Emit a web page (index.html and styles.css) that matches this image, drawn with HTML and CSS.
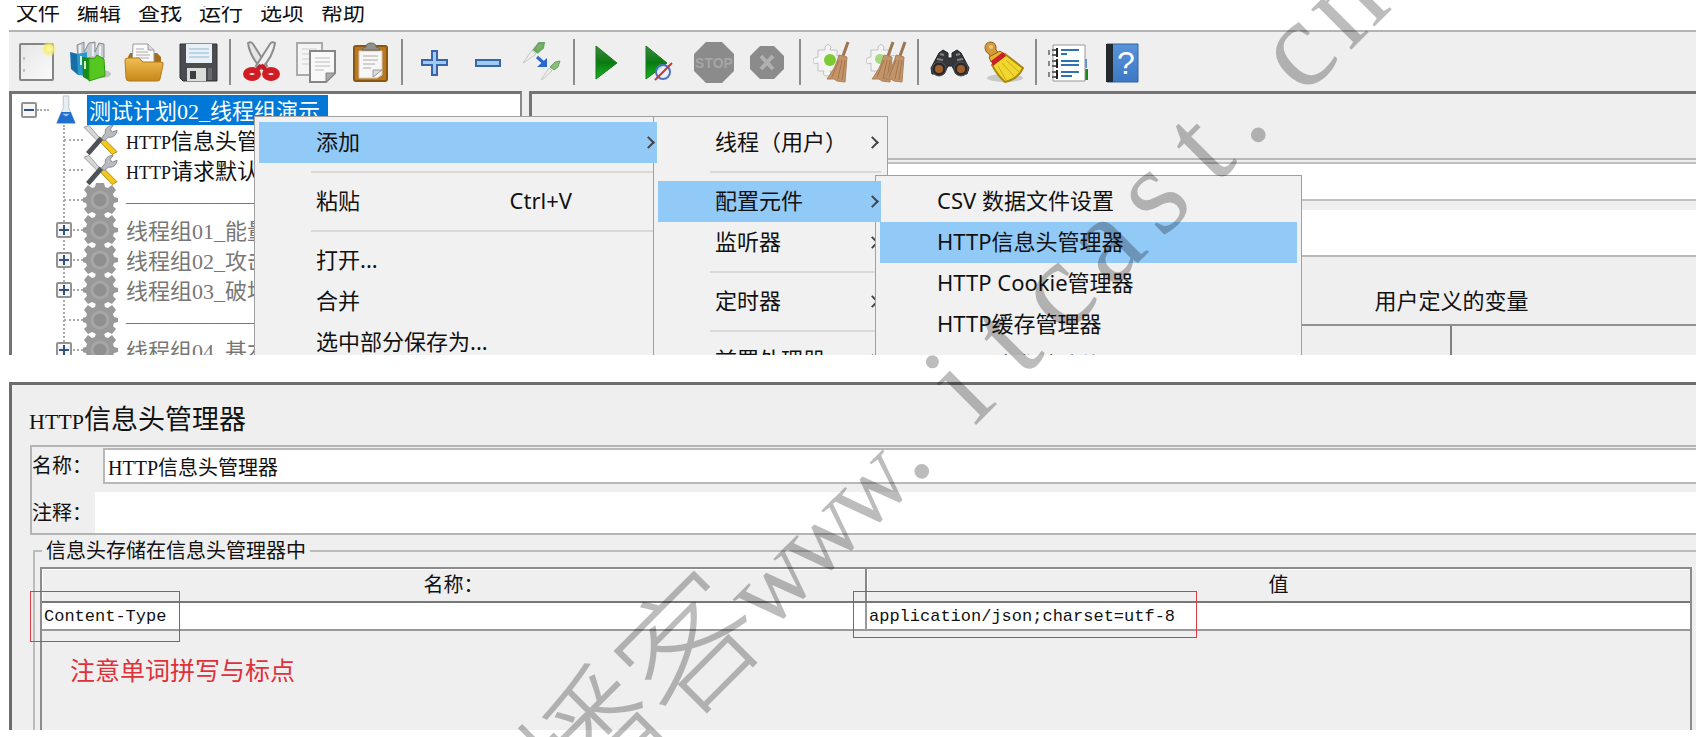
FILE: index.html
```html
<!DOCTYPE html>
<html lang="zh-CN">
<head>
<meta charset="utf-8">
<title>HTTP信息头管理器</title>
<link rel="stylesheet" href="styles.css">
</head>
<body>
<svg class="defs" width="0" height="0" aria-hidden="true">
  <defs>
    <linearGradient id="gPlay" x1="0" y1="0" x2="0" y2="1"><stop offset="0" stop-color="#3f8a45"/><stop offset=".5" stop-color="#0a7a12"/><stop offset="1" stop-color="#18b520"/></linearGradient>
    <linearGradient id="gFolder" x1="0" y1="0" x2="0" y2="1"><stop offset="0" stop-color="#f0bf52"/><stop offset="1" stop-color="#c8861a"/></linearGradient>
    <linearGradient id="gPaper" x1="0" y1="0" x2="1" y2="1"><stop offset="0" stop-color="#e6e6e6"/><stop offset="1" stop-color="#fbfbfb"/></linearGradient>
    <linearGradient id="gHelp" x1="0" y1="0" x2="0" y2="1"><stop offset="0" stop-color="#5a93d8"/><stop offset="1" stop-color="#3c78c4"/></linearGradient>
    <radialGradient id="gGlow"><stop offset="0" stop-color="#fffbb0"/><stop offset=".5" stop-color="#f6ec7c"/><stop offset="1" stop-color="#f6ec7c" stop-opacity="0"/></radialGradient>
    <symbol id="gear" viewBox="0 0 35 34">
      <path fill="#999" d="M13 0h8l1 4 3 1 4-3 4 5-3 4 1 3 4 1v4l-4 1-1 3 3 3-4 5-4-2-4 2-1 2h-6l-1-2-4-2-4 2-4-5 3-3-1-3-4-1v-4l4-1 1-3-3-4 4-5 4 3 3-1z"/>
      <circle cx="17" cy="17" r="8" fill="#8f8f8f" stroke="#a6a6a6" stroke-width="3"/>
    </symbol>
    <symbol id="tools" viewBox="0 0 36 32">
      <path d="M1 3l5-2 13 15-3 2z" fill="#d7d7d7" stroke="#999"/>
      <path d="M17 17l4-3 14 14-5 3z" fill="#f2c71e" stroke="#b08c10"/>
      <path d="M5 30l14-16" stroke="#4d5258" stroke-width="5"/>
      <path d="M19 14l4-5c-1-5 3-8 8-8l-3 4 2 3 5-2c0 5-5 8-9 7l-4 4z" fill="#b9bcc0" stroke="#85888c"/>
    </symbol>
    <symbol id="broom" viewBox="0 0 24 42">
      <path d="M22 1l-5 14" stroke="#9b7650" stroke-width="3"/>
      <path d="M13 14l8 2-2 25-8-1-3-2-7 0c5-7 9-13 12-24z" fill="#c49468" stroke="#a98260"/>
      <path d="M13 19L6 36M16 19l-4 19M19 19l-3 20" stroke="#a1754d" fill="none"/>
    </symbol>
    <symbol id="whiteGear" viewBox="0 0 30 34">
      <path fill="#f4f4f4" stroke="#c2c2c2" d="M12 4q3-5 6 0l-1 3h7v6q6-2 6 3t-6 3v9h-7q2 5-3 5t-3-5H5v-8q-5 2-5-2t5-4V7h7z"/>
    </symbol>
  </defs>
</svg>

<main class="page">
<section class="window window-plan">
  <nav class="menubar">
    <button>文件</button><button>编辑</button><button>查找</button><button>运行</button><button>选项</button><button>帮助</button>
  </nav>

  <div class="toolbar" role="toolbar">
    <button aria-label="新建"><svg viewBox="0 0 42 42"><rect x="5" y="3" width="33" height="36" rx="1" fill="url(#gPaper)" stroke="#858585" stroke-width="2"/><path d="M9 16v3M9 28v3" stroke="#999"/><circle cx="34" cy="8" r="8" fill="url(#gGlow)"/></svg></button>
    <button aria-label="模板"><svg viewBox="0 0 42 42"><ellipse cx="33" cy="33" rx="9" ry="4" fill="#c4c4c4"/><path d="M8 4l7-3v10l5-9 6-1v10l4-9 5 1v14H9z" fill="#c5cbd0" stroke="#878e94"/><path d="M11 4v13M24 3v12M31 5v11" stroke="#eef1f3" stroke-width="2"/><path d="M1 11l8 2v21l-7-6z" fill="#1670a8"/><path d="M8 13l10-2v24l-9-1z" fill="#2c98ca"/><path d="M12 15v9" stroke="#cfefff" stroke-width="2"/><path d="M13 16l8 1v23l-7-4z" fill="#178a17"/><path d="M20 17l5 1 3-4 7 4 1 17-16 5z" fill="#56c71f" stroke="#2f9a12"/><path d="M16 20v8" stroke="#cdf5bb" stroke-width="2"/></svg></button>
    <button aria-label="打开"><svg viewBox="0 0 42 42"><path d="M7 12h27l4 4v17H5V16z" fill="#a56f18"/><path d="M10 3h15l6 6v15H9z" fill="#fafafa" stroke="#999"/><path d="M25 3v6h6" fill="#ddd" stroke="#999"/><path d="M13 8h8M13 11h12M13 14h14M13 17h13" stroke="#aaa"/><path d="M2 19q0-2 3-2h11l4 4h18q3 0 2 3l-3 14q0 2-3 2H6q-3 0-3-3z" fill="url(#gFolder)" stroke="#b47b1c"/></svg></button>
    <button aria-label="保存"><svg viewBox="0 0 42 42"><path d="M3 3h37v37H6l-3-3z" fill="#4a4c50" stroke="#2e3034"/><rect x="9" y="3" width="26" height="19" fill="#e9f1f7"/><path d="M12 8h20M12 12h20M12 16h20" stroke="#8eb9d3"/><path d="M10 27h19v13H10z" fill="#dcdcdc"/><path d="M13 30h6v8h-6z" fill="#3b3d42"/><path d="M31 27h4v12h-4z" fill="#686a6e"/></svg></button>
    <span class="sep"></span>
    <button aria-label="剪切"><svg viewBox="0 0 42 42"><path d="M7 2q3-2 5 1l14 22-5 3Q9 16 7 2z" fill="#e5e5e5" stroke="#8d8d8d" stroke-width="2"/><path d="M34 2q-3-2-5 1L15 25l5 3Q32 16 34 2z" fill="#f0f0f0" stroke="#8d8d8d" stroke-width="2"/><path d="M20 24l-4 5M20 24l5 5" stroke="#c51b20" stroke-width="4"/><ellipse cx="11" cy="33" rx="6" ry="4" fill="none" stroke="#cf1d23" stroke-width="6"/><ellipse cx="30" cy="33" rx="6" ry="4" fill="none" stroke="#cf1d23" stroke-width="6"/></svg></button>
    <button aria-label="复制"><svg viewBox="0 0 42 42"><path d="M2 2h25v32H2z" fill="#f4f4f4" stroke="#aaa" stroke-width="2"/><path d="M7 8h15M7 13h12M7 18h12M7 23h8" stroke="#ccc"/><path d="M15 10h25v22l-9 9H15z" fill="#f8f8f8" stroke="#868686" stroke-width="2"/><path d="M31 41v-9h9z" fill="#aaa" stroke="#868686"/><path d="M20 17h15M20 21h15M20 25h15M20 29h9" stroke="#bbb"/></svg></button>
    <button aria-label="粘贴"><svg viewBox="0 0 42 42"><rect x="5" y="5" width="33" height="35" rx="2" fill="#b9781f" stroke="#8a5610" stroke-width="2"/><path d="M10 10h23v24l-5 3H10z" fill="#f7f7f7" stroke="#d5ccbf"/><path d="M13 9q1-3 4-3 0-4 5-4t5 4q3 0 4 3z" fill="#8f918c" stroke="#696b66"/><path d="M14 15h15M14 19h15M14 23h12M14 27h8" stroke="#aaa"/><path d="M24 36v-7h9z" fill="#ddd" stroke="#999"/></svg></button>
    <span class="sep"></span>
    <button aria-label="展开全部"><svg viewBox="0 0 42 42"><path d="M19 10h5v9h10v5H24v10h-5V24H9v-5h10z" fill="#a3c8f2" stroke="#3767a8" stroke-width="2"/></svg></button>
    <button aria-label="折叠全部"><svg viewBox="0 0 42 42"><rect x="9" y="19" width="24" height="6" fill="#a3c8f2" stroke="#3767a8" stroke-width="2"/></svg></button>
    <button aria-label="切换"><svg viewBox="0 0 42 42"><path d="M2 22L11 9l4 4L4 21z" fill="#eee" stroke="#c5c9c2"/><path d="M12 8l5 4M14 7l4-5 5 0-1 5-5 4z" stroke="#6ca862" stroke-width="2" fill="#7cb270"/><path d="M16 16l8 7" stroke="#2c66d0" stroke-width="3"/><path d="M26 17v9h-10z" fill="#2c66d0"/><path d="M20 39l8-12 3 3-9 8z" fill="#eee" stroke="#c5c9c2"/><path d="M29 26l5-5 5-1-2 6-4 3z" fill="#8abb7f" stroke="#6ca862"/></svg></button>
    <span class="sep"></span>
    <button aria-label="启动"><svg viewBox="0 0 42 42"><path d="M11 5v33l21-16z" fill="url(#gPlay)" stroke="#147a1b"/></svg></button>
    <button aria-label="不停顿开始"><svg viewBox="0 0 42 42"><path d="M7 5v33l21-16z" fill="url(#gPlay)" stroke="#147a1b"/><circle cx="24" cy="31" r="7" fill="#e8eefb" fill-opacity=".8" stroke="#4b74bf" stroke-width="2"/><path d="M16 39l17-17" stroke="#c73737" stroke-width="2"/></svg></button>
    <button aria-label="停止"><svg viewBox="0 0 42 42"><path d="M13 1h16l12 12v17L29 42H13L1 30V13z" fill="#8b8b8b"/><text x="21" y="27" text-anchor="middle" class="stop-text">STOP</text></svg></button>
    <button aria-label="关闭"><svg viewBox="0 0 42 42"><path d="M13 5h14l10 10v13L27 38H13L3 28V15z" fill="#8b8b8b"/><path d="M14 15l12 13M26 15L14 28" stroke="#b0b0b0" stroke-width="4"/></svg></button>
    <span class="sep"></span>
    <button aria-label="清除"><svg viewBox="0 0 42 42"><use href="#whiteGear" x="2" y="2" width="30" height="34"/><circle cx="19" cy="19" r="6" fill="#7ccb32"/><use href="#broom" x="15" y="0" width="24" height="42"/></svg></button>
    <button aria-label="清除全部"><svg viewBox="0 0 42 42"><use href="#whiteGear" x="1" y="2" width="30" height="34"/><circle cx="15" cy="18" r="5" fill="#a5d880"/><use href="#broom" x="6" y="0" width="24" height="42"/><use href="#broom" x="18" y="0" width="24" height="42"/></svg></button>
    <span class="sep"></span>
    <button aria-label="查找"><svg viewBox="0 0 42 42"><path d="M2 27L10 12l4-3 5 3v5h4v-5l5-3 4 3 8 15-2 6H27l-4-8h-4l-4 8H3z" fill="#35363a" stroke="#1f2022"/><path d="M11 13l4 1M27 14l4-1M8 18l6 1M28 19l6-1" stroke="#808286" stroke-width="2"/><circle cx="10" cy="28" r="7" fill="#2b2b2d" stroke="#555"/><circle cx="32" cy="28" r="7" fill="#2b2b2d" stroke="#555"/><circle cx="10" cy="28" r="4" fill="#a35f29"/><circle cx="32" cy="28" r="4" fill="#a35f29"/></svg></button>
    <button aria-label="重置查找"><svg viewBox="0 0 42 42"><ellipse cx="22" cy="37" rx="18" ry="4" fill="#c9c9c9"/><path d="M2 7q0-6 6-6 6 1 5 8l3 3-8 5-2-4Q2 11 2 7z" fill="#d59a3f" stroke="#96631a"/><circle cx="8" cy="6" r="2" fill="#f0c878"/><path d="M6 16l11-6 4 3-13 8z" fill="#e8b62d" stroke="#96631a"/><path d="M9 24l13-11 18 14q-5 11-18 14-7-6-13-17z" fill="#f1d72d" stroke="#a88a10" stroke-width="2"/><path d="M8 20l12-9 3 4-13 10z" fill="#c8202a"/><path d="M15 25l8 14M19 22l12 13M23 19l13 12" stroke="#c9a91c"/></svg></button>
    <span class="sep"></span>
    <button aria-label="函数助手"><svg viewBox="0 0 42 42"><path d="M36 18h4v9h-4z" fill="#5b8fd8"/><path d="M35 28h6v11h-6z" fill="#188a1c"/><path d="M6 4h32v36H6z" fill="#fff" stroke="#999"/><path d="M2 9v5M2 20v5M2 31v5" stroke="#888" stroke-width="2"/><path d="M5 9h4M5 14h4M5 20h4M5 25h4M5 31h4M5 36h4" stroke="#666" stroke-width="2"/><path d="M10 7v9M10 18v9M10 29v9" stroke="#222" stroke-width="2"/><path d="M14 9h18M14 13h6M14 20h18M14 24h18M14 31h18M14 35h11" stroke="#2f73b0" stroke-width="2"/></svg></button>
    <button aria-label="帮助"><svg viewBox="0 0 42 42"><path d="M6 3h31v38H6z" fill="url(#gHelp)" stroke="#35639d"/><path d="M5 3h7v38H5z" fill="#24282f"/><text x="25" y="33" text-anchor="middle" class="help-text">?</text></svg></button>
  </div>

  <div class="split">
    <div class="tree-pane">
      <ul class="tree">
        <li>
          <div class="row row-root"><button class="toggle" aria-label="折叠"><i class="minus"></i></button><i class="dots"></i>
            <svg class="flask" viewBox="0 0 24 32"><path d="M9 1h6v13l7 16H2l7-16z" fill="#e9eef3" stroke="#b9c2ca"/><path d="M7 18h10l5 12H2z" fill="#1f6fd0"/><path d="M8 20l4 3 4-3" fill="#9cc8f4"/></svg>
            <span class="label selected">测试计划02_线程组演示</span></div>
          <ul class="children">
            <li class="row"><span class="knot"></span><svg class="node-icon"><use href="#tools"/></svg><span class="label"><span class="caps">HTTP</span>信息头管理器</span></li>
            <li class="row"><span class="knot"></span><svg class="node-icon"><use href="#tools"/></svg><span class="label"><span class="caps">HTTP</span>请求默认值</span></li>
            <li class="row off"><span class="knot"></span><svg class="node-icon"><use href="#gear"/></svg><span class="label">————————</span></li>
            <li class="row off"><span class="knot"><button class="toggle" aria-label="展开"><i class="plus"></i></button></span><svg class="node-icon"><use href="#gear"/></svg><span class="label">线程组01_能量</span></li>
            <li class="row off"><span class="knot"><button class="toggle" aria-label="展开"><i class="plus"></i></button></span><svg class="node-icon"><use href="#gear"/></svg><span class="label">线程组02_攻击</span></li>
            <li class="row off"><span class="knot"><button class="toggle" aria-label="展开"><i class="plus"></i></button></span><svg class="node-icon"><use href="#gear"/></svg><span class="label">线程组03_破坏</span></li>
            <li class="row off"><span class="knot"></span><svg class="node-icon"><use href="#gear"/></svg><span class="label">————————</span></li>
            <li class="row off"><span class="knot"><button class="toggle" aria-label="展开"><i class="plus"></i></button></span><svg class="node-icon"><use href="#gear"/></svg><span class="label">线程组04_基本</span></li>
          </ul>
        </li>
      </ul>
    </div>
    <div class="detail-pane">
      <div class="plan-form">
        <div class="plan-head"></div>
        <div class="plan-fields">
          <input class="plan-name" type="text" aria-label="名称">
          <input class="plan-note" type="text" aria-label="注释">
        </div>
        <h2 class="plan-title">用户定义的变量</h2>
        <div class="plan-cols"><span></span><span></span></div>
      </div>
    </div>
  </div>

  <ul class="menu menu-main" role="menu">
    <li><button class="item active"><span>添加</span><i class="arrow"></i></button></li>
    <li class="rule"></li>
    <li><button class="item"><span>粘贴</span><kbd>Ctrl+V</kbd></button></li>
    <li class="rule"></li>
    <li><button class="item"><span>打开...</span></button></li>
    <li><button class="item"><span>合并</span></button></li>
    <li><button class="item"><span>选中部分保存为...</span></button></li>
  </ul>
  <ul class="menu menu-add" role="menu">
    <li><button class="item"><span>线程（用户）</span><i class="arrow"></i></button></li>
    <li class="rule"></li>
    <li><button class="item active"><span>配置元件</span><i class="arrow"></i></button></li>
    <li><button class="item"><span>监听器</span><i class="arrow"></i></button></li>
    <li class="rule"></li>
    <li><button class="item"><span>定时器</span><i class="arrow"></i></button></li>
    <li class="rule"></li>
    <li><button class="item"><span>前置处理器</span><i class="arrow"></i></button></li>
  </ul>
  <ul class="menu menu-config" role="menu">
    <li><button class="item"><span>CSV 数据文件设置</span></button></li>
    <li><button class="item active"><span>HTTP信息头管理器</span></button></li>
    <li><button class="item"><span>HTTP Cookie管理器</span></button></li>
    <li><button class="item"><span>HTTP缓存管理器</span></button></li>
    <li><button class="item"><span>HTTP请求默认值</span></button></li>
  </ul>
</section>

<section class="window window-header">
  <h1 class="title"><span class="caps">HTTP</span>信息头管理器</h1>
  <div class="fields">
    <div class="field"><label for="name">名称：</label><input id="name" class="name-input" type="text" value="HTTP信息头管理器"></div>
    <div class="field"><label for="note">注释：</label><input id="note" class="note-input" type="text"></div>
  </div>
  <fieldset class="store">
    <legend>信息头存储在信息头管理器中</legend>
    <div class="table-box">
      <table>
        <thead><tr><th>名称：</th><th>值</th></tr></thead>
        <tbody><tr><td><span class="mark mark-key">Content-Type</span></td><td><span class="mark mark-value">application/json;charset=utf-8</span></td></tr></tbody>
      </table>
      <p class="hint">注意单词拼写与标点</p>
    </div>
  </fieldset>
</section>

<svg class="watermark" aria-hidden="true">
  <g transform="translate(688 645) rotate(-45)" text-anchor="middle">
    <text class="wm-cjk" x="-136 0" y="52">播客</text>
    <text class="wm-w" x="102 170 238" y="48">www</text>
    <text class="wm-latin" x="288 374 442 510 578 646 714 764 850 918" y="48">.itcast.cn</text>
  </g>
</svg>
</main>
</body>
</html>
```
FILE: styles.css
```css
* { box-sizing: border-box; }
body {
  margin: 0;
  background: #fff;
  color: #111;
  font: 22px/30px "Liberation Serif", "Noto Sans CJK SC", sans-serif;
}
ul { list-style: none; margin: 0; padding: 0; }
button { border: 0; padding: 0; margin: 0; background: none; font: inherit; color: inherit; }
input { border: 0; border-radius: 0; padding: 0; font: inherit; color: inherit; background: #fff; min-width: 0; outline: 0; }
.defs { position: absolute; }
.page { position: relative; min-height: 100vh; overflow: hidden; padding: 6px 2px 7px 9px; }
.window { position: relative; overflow: hidden; background: #efefef; }

/* upper window */
.window-plan { height: 349px; }
.menubar {
  display: flex;
  gap: 17px;
  height: 26px;
  padding-left: 7px;
  background: #fff;
  border-bottom: 2px solid #b4b4b4;
  font-family: "Noto Sans", "Noto Sans CJK SC", sans-serif;
}
.menubar button { height: 10px; line-height: 10px; }
.toolbar { display: flex; align-items: center; height: 59px; }
.toolbar button { width: 54px; height: 42px; display: flex; justify-content: center; }
.toolbar svg { width: 42px; height: 42px; }
.sep { width: 10px; height: 46px; border-left: 4px solid #efefef; border-right: 4px solid #efefef; background: #8c8c8c; }
.stop-text { font: bold 14px "Liberation Sans", sans-serif; fill: #a6a6a6; }
.help-text { font: 32px "Liberation Sans", sans-serif; fill: #fff; }

.split { display: flex; gap: 7px; height: 264px; }
.tree-pane { width: 513px; flex: none; background: #fff; border: 3px solid #747476; border-right: 2px solid #8a8a8a; border-bottom: 0; overflow: hidden; padding: 1px 0 0 9px; }
.detail-pane { flex: 1; min-width: 0; border: 3px solid #747476; border-right: 0; border-bottom: 0; overflow: hidden; }
.row { display: flex; align-items: center; height: 30px; white-space: nowrap; }
.off { color: #777; }
.toggle { position: relative; width: 16px; height: 16px; flex: none; background: #f6f6f6; border: 2px solid #929292; border-radius: 2px; }
.minus, .plus { position: absolute; left: 1px; top: 5px; width: 10px; height: 2px; background: #33517f; }
.plus::after { content: ""; position: absolute; left: 4px; top: -4px; width: 2px; height: 10px; background: #33517f; }
.dots { width: 12px; border-top: 2px dotted #aaa; }
.flask { width: 24px; height: 30px; margin: 0 9px 0 5px; }
.label { height: 30px; line-height: 33px; }
.selected { background: #0078d7; color: #fff; padding: 0 8px 0 2px; }
.children { position: relative; padding-left: 35px; }
.children::before { content: ""; position: absolute; left: 42px; top: 0; bottom: 0; border-left: 2px dotted #aaa; }
.knot { position: relative; width: 27px; height: 16px; flex: none; }
.knot::before { content: ""; position: absolute; left: 8px; right: 0; top: 7px; border-top: 2px dotted #aaa; }
.knot .toggle { display: block; }
.node-icon { width: 35px; height: 34px; flex: none; margin-right: 8px; }
.caps { font-size: 18px; }

.plan-form { width: 158%; }
.plan-head { height: 64px; }
.plan-fields { display: flex; flex-direction: column; gap: 9px; border: 2px solid #b8b8b8; border-right: 0; padding-top: 2px; }
.plan-name { height: 39px; border: 2px solid #c0c0c0; }
.plan-note { height: 45px; }
.plan-title { margin: 0; padding: 30px 0 7px; font-size: 22px; line-height: 30px; font-weight: 400; text-align: center; }
.plan-cols { display: grid; grid-template-columns: 1fr 1fr; height: 60px; border-top: 2px solid #909094; }
.plan-cols span { border-right: 2px solid #808080; }

.menu {
  position: absolute;
  background: #f1f1f1;
  border: 1px solid #a0a0a0;
  padding: 5px 6px 4px 4px;
  font-family: "Noto Sans", "Noto Sans CJK SC", sans-serif;
}
.menu-main { left: 245px; top: 110px; width: 404px; padding-right: 0; }
.menu-add { left: 644px; top: 110px; width: 235px; }
.menu-config { left: 866px; top: 169px; width: 427px; padding-right: 4px; }
.item { position: relative; display: flex; align-items: center; width: 100%; height: 41px; padding: 0 0 4px 57px; white-space: nowrap; text-align: left; }
.item span { flex: 1; }
.item kbd { font: inherit; margin-right: 85px; }
.active { z-index: 2; background: #91c9f7; }
.arrow { position: absolute; top: 16px; right: 4px; width: 9px; height: 9px; border: solid #444; border-width: 2px 2px 0 0; transform: rotate(45deg); }
.rule { height: 18px; margin-left: 52px; padding-top: 8px; }
.rule::before { content: ""; display: block; height: 2px; background: #d9d9d9; }

/* lower window */
.window-header {
  height: 348px;
  margin-top: 27px;
  border: 3px solid #6c6c6c;
  border-width: 3px 0 0 3px;
  padding: 15px 0 0 17px;
  font-size: 20px;
}
.title { margin: 0 0 3px; font-size: 27px; line-height: 40px; font-weight: 400; }
.title .caps { font-size: 22px; }
.fields { display: flex; flex-direction: column; gap: 8px; border: 2px solid #b4b4b4; border-right: 0; padding: 1px 0 0; margin-left: 1px; }
.field { display: flex; align-items: center; }
.field label { width: 63px; white-space: nowrap; }
.name-input { flex: 1; height: 36px; margin-left: 8px; border: 2px solid #b8b8b8; border-right: 0; padding-left: 3px; }
.note-input { flex: 1; height: 41px; }
.store { margin: 0 -8px 0 4px; min-width: 0; padding: 0 10px 0 5px; border: 2px solid #bcbcbc; border-bottom: 0; }
.store legend { margin-left: 2px; padding: 0 4px; line-height: 32px; font-size: 20px; }
.table-box { border: 2px solid #8c8c8c; border-bottom: 0; height: 170px; }
table { width: 100%; border-collapse: collapse; table-layout: fixed; }
th { height: 33px; padding: 0; font-weight: 400; border-bottom: 2px solid #777; border-right: 2px solid #888; box-shadow: inset 1px 1px #fff; }
td { height: 28px; padding: 2px 0 0; background: #fff; border-bottom: 2px solid #999; border-right: 2px solid #999; font: 17px/24px "Liberation Mono", monospace; }
th:last-child, td:last-child { border-right: 0; }
.mark { position: relative; padding-left: 2px; }
.mark::after { content: ""; position: absolute; border: 1px solid #dd3b45; }
.mark-key::after { inset: -16px -14px -16px -12px; }
.mark-value::after { inset: -16px -22px -12px -14px; }
.hint { margin: 21px 0 0 28px; font: 25px/34px "Noto Sans CJK SC", sans-serif; color: #e0313a; }

.watermark { position: absolute; left: 0; top: 0; width: 100%; height: 100%; pointer-events: none; fill: #000; opacity: .26; z-index: 9; }
.wm-cjk { font: 300 136px "Noto Sans CJK SC", sans-serif; }
.wm-w { font: 106px "Liberation Serif", serif; }
.wm-latin { font: 124px "Liberation Serif", serif; }
```
